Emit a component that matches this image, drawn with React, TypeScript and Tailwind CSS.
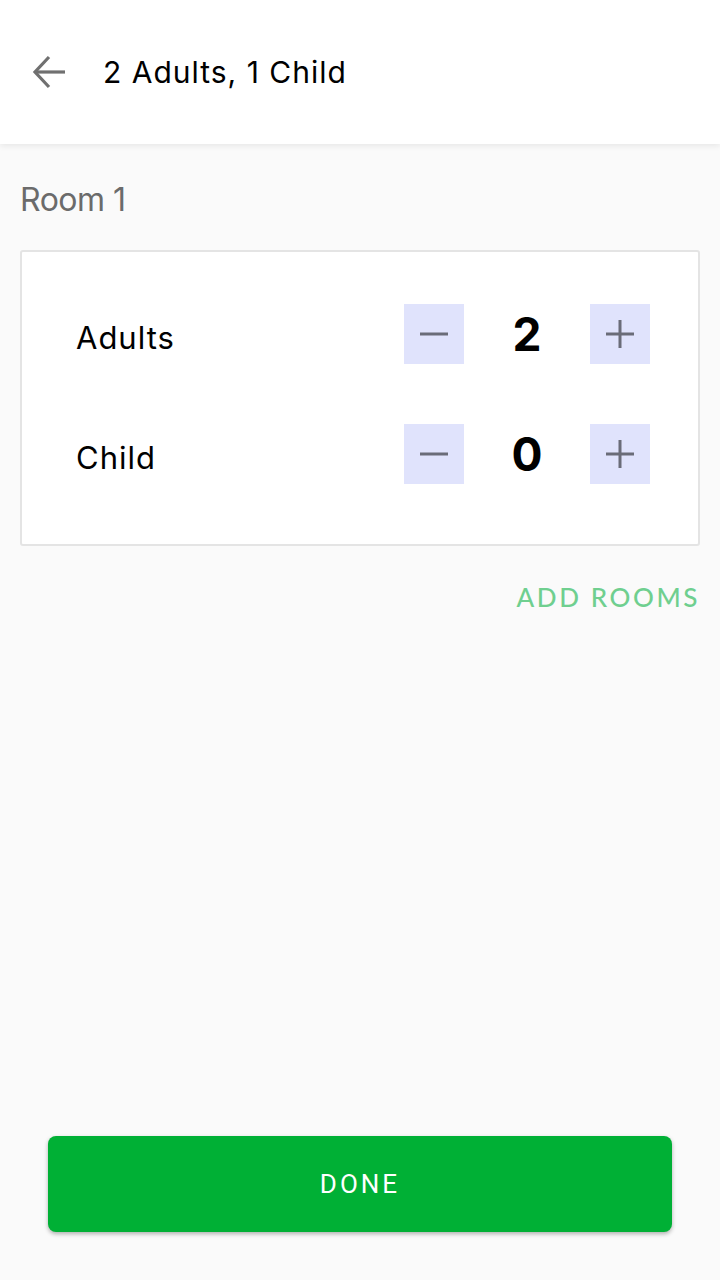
import React, { useState } from "react";

function Counter({ label, value, onChange }: { label: string; value: number; onChange: (v: number) => void }) {
  return (
    <div className="flex items-center h-[60px]">
      <p className="flex-1 pl-[54px] pt-[8px] text-[31px] tracking-[1px] text-black">{label}</p>
      <button
        className="w-[60px] h-[60px] bg-[#e0e3fc] flex items-center justify-center"
        onClick={() => onChange(Math.max(0, value - 1))}
      >
        <svg width="30" height="30" viewBox="0 0 30 30">
          <rect x="1" y="13.5" width="28" height="3" fill="#6a6c78" />
        </svg>
      </button>
      <p className="w-[126px] text-center text-[46px] leading-[60px] font-bold text-black">{value}</p>
      <button
        className="w-[60px] h-[60px] bg-[#e0e3fc] flex items-center justify-center mr-[48px]"
        onClick={() => onChange(value + 1)}
      >
        <svg width="30" height="30" viewBox="0 0 30 30">
          <rect x="1" y="13.5" width="28" height="3" fill="#6a6c78" />
          <rect x="13.5" y="1" width="3" height="28" fill="#6a6c78" />
        </svg>
      </button>
    </div>
  );
}

export default function App() {
  const [adults, setAdults] = useState(2);
  const [child, setChild] = useState(0);

  return (
    <div className="h-[1280px] flex flex-col bg-[#fafafa] font-['Inter',sans-serif]">
      <div className="h-[144px] bg-white flex items-center shadow-[0_2px_6px_rgba(0,0,0,0.08)] z-10">
        <svg className="ml-[32px]" width="36" height="36" viewBox="0 0 36 36" fill="none" stroke="#707070" strokeWidth="3.2">
          <path d="M33 18H4" />
          <path d="M17 3L3 18l14 15" />
        </svg>
        <h1 className="ml-[35px] text-[30px] text-black tracking-[1px]">2 Adults, 1 Child</h1>
      </div>

      <div className="px-[20px]">
        <p className="mt-[36px] text-[32px] leading-[40px] text-[#6b6b6b] tracking-[-0.5px]">Room 1</p>
        <div className="mt-[30px] bg-white border-2 border-[#e4e4e4] rounded-[3px] pt-[52px] pb-[60px] flex flex-col gap-[60px]">
          <Counter label="Adults" value={adults} onChange={setAdults} />
          <Counter label="Child" value={child} onChange={setChild} />
        </div>
        <div className="flex justify-end mt-[32px]">
          <button className="text-[26px] font-medium tracking-[2.6px] text-[#6fcf8f] font-['Lato',sans-serif]">ADD ROOMS</button>
        </div>
      </div>

      <div className="mt-auto px-[48px] pb-[48px]">
        <button className="w-full h-[96px] bg-[#00b035] rounded-[8px] shadow-[0_2px_4px_rgba(0,0,0,0.3)] text-white text-[26px] tracking-[3px] font-['Roboto',sans-serif]">
          DONE
        </button>
      </div>
    </div>
  );
}
